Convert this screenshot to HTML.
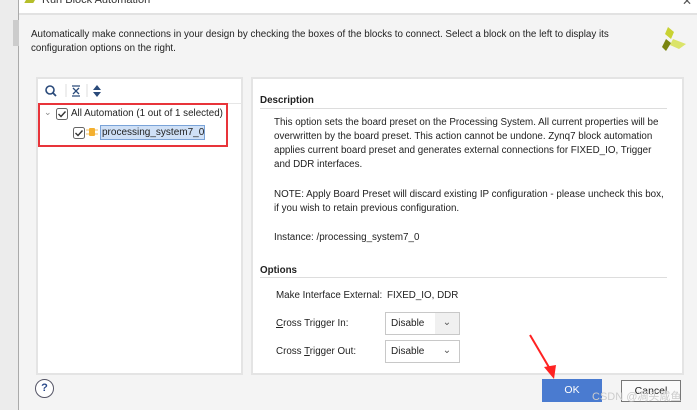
<!DOCTYPE html>
<html><head><style>
*{margin:0;padding:0;box-sizing:border-box}
body{width:697px;height:410px;overflow:hidden;background:#f4f4f4;font-family:"Liberation Sans",Arial,sans-serif;font-size:9.8px;color:#222;position:relative}
.abs{position:absolute}
.sel{position:absolute;width:75px;height:23px;border:1px solid #c8c8c8;background:#fff;font-size:10px;padding:5px 0 0 5px}
.sel .ar{position:absolute;right:0;top:0;width:24px;height:21px;background:#f0f0f0;text-align:center;line-height:19px;color:#555}
p{position:absolute;left:274px;font-size:9.8px;line-height:14px;white-space:nowrap}
.cb{position:absolute}
</style></head><body>
<div class="abs" style="left:0;top:0;width:19px;height:410px;background:#ececec;border-right:1px solid #aaa"></div>
<div class="abs" style="left:13px;top:20px;width:6px;height:26px;background:#ccc"></div>
<div class="abs" style="left:19px;top:0;width:678px;height:15px;background:#fff;border-bottom:2px solid #e2e2e2"></div>
<div class="abs" style="left:42px;top:-6px;font-size:11px;color:#333">Run Block Automation</div>
<div class="abs" style="left:26px;top:-3px;width:9px;height:6px;background:#b5be2a;transform:skew(-30deg)"></div>
<div class="abs" style="left:682px;top:-6px;font-size:12px;color:#555">✕</div>
<div class="abs" style="left:31px;top:28px;line-height:14px">Automatically make connections in your design by checking the boxes of the blocks to connect. Select a block on the left to display its<br>configuration options on the right.</div>
<svg class="abs" style="left:660px;top:26px" width="28" height="28" viewBox="0 0 28 28"><polygon points="8,1 14,6 11,13 5,8" fill="#c9d233"/><polygon points="13,13 26,18 19,23 10,19" fill="#dbe46a"/><polygon points="6,13 11,17 6,25 2,21" fill="#7a8510"/></svg>
<!-- left panel -->
<div class="abs" style="left:36px;top:77px;width:207px;height:298px;background:#fff;border:2px solid #e4e4e4"></div>
<div class="abs" style="left:38px;top:103px;width:203px;height:1px;background:#e6e6e6"></div>
<svg class="abs" style="left:44px;top:84px" width="70" height="14"><circle cx="6" cy="6" r="4" fill="none" stroke="#2a4a7a" stroke-width="1.6"/><line x1="9" y1="9" x2="12" y2="12" stroke="#2a4a7a" stroke-width="1.8"/><line x1="22" y1="0" x2="22" y2="13" stroke="#ddd"/><path d="M28 2h8M28 12h8M29 4l3 3 3-3M29 10l3-3 3 3" stroke="#2a4a7a" fill="none" stroke-width="1.3"/><line x1="43" y1="0" x2="43" y2="13" stroke="#ddd"/><path d="M53 1l-4 5h8zM53 13l-4-5h8z" fill="#2a4a7a"/></svg>
<div class="abs" style="left:38px;top:103px;width:190px;height:44px;border:2px solid #e8343a"></div>
<div class="abs" style="left:44px;top:107px;color:#888;font-size:9px">⌄</div>
<svg class="cb" style="left:56px;top:108px" width="12" height="12"><rect x="0.5" y="0.5" width="11" height="11" rx="2" fill="#fff" stroke="#666"/><path d="M2.5 6l2.5 2.5 4.5-5" stroke="#333" stroke-width="1.4" fill="none"/></svg>
<div class="abs" style="left:71px;top:108px">All Automation (1 out of 1 selected)</div>
<svg class="cb" style="left:73px;top:127px" width="12" height="12"><rect x="0.5" y="0.5" width="11" height="11" rx="2" fill="#fff" stroke="#666"/><path d="M2.5 6l2.5 2.5 4.5-5" stroke="#333" stroke-width="1.4" fill="none"/></svg>
<svg class="abs" style="left:86px;top:126px" width="12" height="12"><rect x="3" y="2" width="6" height="8" rx="1" fill="#f4b030"/><path d="M0 4h3M0 8h3M9 4h3M9 8h3" stroke="#f4c060"/></svg>
<div class="abs" style="left:100px;top:125px;width:105px;height:15px;background:#cfe0f6;border:1px solid #7aa3d8;padding:1px 0 0 1px;font-size:10px;white-space:nowrap;overflow:hidden">processing_system7_0</div>
<!-- right panel -->
<div class="abs" style="left:251px;top:77px;width:433px;height:298px;background:#fff;border:2px solid #e4e4e4"></div>
<div class="abs" style="left:260px;top:95px;font-weight:bold">Description</div>
<div class="abs" style="left:260px;top:108px;width:407px;height:1px;background:#ddd"></div>
<p style="top:116px">This option sets the board preset on the Processing System. All current properties will be<br>overwritten by the board preset. This action cannot be undone. Zynq7 block automation<br>applies current board preset and generates external connections for FIXED_IO, Trigger<br>and DDR interfaces.</p>
<p style="top:188px">NOTE: Apply Board Preset will discard existing IP configuration - please uncheck this box,<br>if you wish to retain previous configuration.</p>
<p style="top:231px">Instance: /processing_system7_0</p>
<div class="abs" style="left:260px;top:265px;font-weight:bold">Options</div>
<div class="abs" style="left:260px;top:277px;width:407px;height:1px;background:#ddd"></div>
<div class="abs" style="left:276px;top:290px">Make Interface External:</div>
<div class="abs" style="left:387px;top:290px">FIXED_IO, DDR</div>
<div class="abs" style="left:276px;top:318px"><u>C</u>ross Trigger In:</div>
<div class="abs" style="left:276px;top:346px">Cross <u>T</u>rigger Out:</div>
<div class="sel" style="left:385px;top:312px">Disable<div class="ar">⌄</div></div>
<div class="sel" style="left:385px;top:340px">Disable<div class="ar" style="background:#fff">⌄</div></div>
<!-- bottom -->
<div class="abs" style="left:35px;top:379px;width:19px;height:19px;border:1px solid #556;border-radius:50%;text-align:center;font-weight:bold;color:#2a4a8a;font-size:11px;line-height:17px;background:#fff">?</div>
<div class="abs" style="left:542px;top:379px;width:60px;height:23px;background:#4a7bd0;color:#fff;text-align:center;line-height:23px;font-size:10.5px">OK</div>
<div class="abs" style="left:621px;top:380px;width:60px;height:22px;border:1px solid #777;background:#fafafa;text-align:center;line-height:20px;font-size:10.5px">Cancel</div>
<svg class="abs" style="left:528px;top:333px" width="30" height="48"><line x1="2" y1="2" x2="22" y2="36" stroke="#f22" stroke-width="2"/><polygon points="16,34 28,32 26,46" fill="#f22"/></svg>
<div class="abs" style="left:592px;top:388px;color:#ccc;font-size:11px;font-family:'Liberation Sans','Noto Sans CJK SC',sans-serif">CSDN @凋头咸鱼</div>
</body></html>
